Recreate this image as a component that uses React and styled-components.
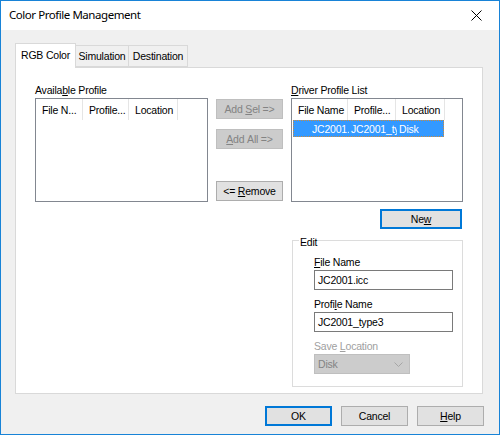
import React from "react"
import styled, { createGlobalStyle } from "styled-components"

const GlobalStyle = createGlobalStyle`
  html, body {
    margin: 0;
    padding: 0;
    background: #ffffff;
  }
  * {
    box-sizing: border-box;
  }
`

const Window = styled.div`
  width: 500px;
  height: 435px;
  border: 1px solid #1883d7;
  background: #f0f0f0;
  display: flex;
  flex-direction: column;
  font-family: "Liberation Sans", Arial, sans-serif;
  font-size: 10.5px;
  letter-spacing: -0.2px;
  color: #000;
  overflow: hidden;
`

const TitleBar = styled.div`
  height: 29px;
  background: #fff;
  display: flex;
  align-items: center;
  justify-content: space-between;
  padding: 0 0 0 8px;
  flex-shrink: 0;
`

const Title = styled.span`
  font-family: "Noto Sans", "Open Sans", sans-serif;
  font-size: 11.5px;
  letter-spacing: -0.45px;
  color: #000;
  padding-bottom: 2px;
`

const CloseBox = styled.div`
  width: 46px;
  height: 29px;
  display: flex;
  align-items: center;
  justify-content: center;
`

const Body = styled.div`
  flex: 1;
  padding: 13px 15px 0 14px;
  display: flex;
  flex-direction: column;
`

const TabStrip = styled.div`
  display: flex;
  align-items: flex-end;
  height: 24px;
  position: relative;
  z-index: 1;
`

const Tab = styled.div`
  height: ${({ active }) => (active ? "25px" : "22px")};
  width: ${({ w }) => w}px;
  margin-bottom: ${({ active }) => (active ? "-1px" : "0")};
  display: flex;
  align-items: center;
  justify-content: center;
  background: ${({ active }) => (active ? "#fff" : "#f0f0f0")};
  border: 1px solid #d9d9d9;
  border-bottom: ${({ active }) => (active ? "none" : "1px solid #d9d9d9")};
  margin-left: ${({ first }) => (first ? "0" : "-1px")};
  padding-bottom: ${({ active }) => (active ? "2px" : "0")};
`

const Panel = styled.div`
  width: 468px;
  height: 327px;
  background: #fff;
  border: 1px solid #d9d9d9;
  padding: 15px 0 0 19px;
  display: flex;
  gap: 8px;
`

const Column = styled.div`
  display: flex;
  flex-direction: column;
  width: ${({ w }) => w}px;
`

const Label = styled.div`
  height: 14px;
  line-height: 14px;
  margin-bottom: ${({ mb }) => mb || 1}px;
  color: ${({ disabled }) => (disabled ? "#a0a0a0" : "#000")};
  white-space: nowrap;
`

const Key = styled.span`
  text-decoration: underline;
  text-underline-offset: 1px;
`

const ListBox = styled.div`
  width: ${({ w }) => w}px;
  height: 104px;
  border: 1px solid #828790;
  background: #fff;
  display: flex;
  flex-direction: column;
`

const HeaderRow = styled.div`
  display: flex;
  height: 21px;
`

const HeaderCell = styled.div`
  width: ${({ w }) => w}px;
  padding-left: 6px;
  border-right: 1px solid #e5e5e5;
  display: flex;
  align-items: center;
  white-space: nowrap;
  overflow: hidden;
`

const SelectedRow = styled.div`
  display: flex;
  height: 17px;
  margin-left: 1px;
  width: 151px;
  background: #3399ff;
  color: #fff;
  outline: 1px dotted #cc8a3a;
  outline-offset: -1px;
`

const Cell = styled.div`
  width: ${({ w }) => w}px;
  flex-shrink: 0;
  padding-left: ${({ pad }) => pad}px;
  display: flex;
  align-items: center;
  white-space: nowrap;
  overflow: hidden;
`

const ButtonStack = styled.div`
  display: flex;
  flex-direction: column;
  width: 67px;
  padding-top: 16px;
`

const Button = styled.div`
  width: ${({ w }) => w || 67}px;
  height: 20px;
  display: flex;
  align-items: center;
  justify-content: center;
  background: ${({ disabled }) => (disabled ? "#cccccc" : "#e1e1e1")};
  border: 1px solid
    ${({ disabled, primary }) =>
      disabled ? "#bfbfbf" : primary ? "#0078d7" : "#adadad"};
  box-shadow: ${({ primary }) => (primary ? "inset 0 0 0 1px #0078d7" : "none")};
  color: ${({ disabled }) => (disabled ? "#838383" : "#000")};
  margin-top: ${({ mt }) => mt || 0}px;
  white-space: nowrap;
`

const RightActions = styled.div`
  display: flex;
  justify-content: flex-end;
  padding-right: 1px;
  margin-top: 7px;
`

const GroupBox = styled.fieldset`
  margin: 3px 0 0 1px;
  width: 171px;
  height: 155px;
  flex-shrink: 0;
  border: 1px solid #dcdcdc;
  padding: 0 0 0 21px;
  display: flex;
  flex-direction: column;
`

const Legend = styled.legend`
  padding: 4px 1px 0;
  margin-left: -15px;
  line-height: 12px;
`

const Field = styled.div`
  display: flex;
  flex-direction: column;
  margin-top: ${({ mt }) => mt}px;
`

const Input = styled.div`
  width: 139px;
  height: 20px;
  border: 1px solid #7a7a7a;
  background: #fff;
  padding-left: 3px;
  display: flex;
  align-items: center;
`

const Select = styled.div`
  width: 96px;
  height: 20px;
  border: 1px solid #bfbfbf;
  background: #cccccc;
  color: #838383;
  padding: 0 6px 0 3px;
  display: flex;
  align-items: center;
  justify-content: space-between;
`

const Footer = styled.div`
  display: flex;
  justify-content: flex-end;
  gap: 9px;
  padding-top: 12px;
`

const CloseIcon = () => (
  <svg width="11" height="11" viewBox="0 0 11 11">
    <path d="M0.5 0.5 L10.5 10.5 M10.5 0.5 L0.5 10.5" stroke="#000" strokeWidth="1" />
  </svg>
)

const Chevron = () => (
  <svg width="9" height="5" viewBox="0 0 9 5">
    <path d="M0.5 0.5 L4.5 4.5 L8.5 0.5" stroke="#a6a6a6" strokeWidth="1" fill="none" />
  </svg>
)

const App = () => {
  return (
    <>
      <GlobalStyle />
      <Window>
        <TitleBar>
          <Title>Color Profile Management</Title>
          <CloseBox>
            <CloseIcon />
          </CloseBox>
        </TitleBar>
        <Body>
          <TabStrip>
            <Tab active first w={61}>RGB Color</Tab>
            <Tab w={54}>Simulation</Tab>
            <Tab w={60}>Destination</Tab>
          </TabStrip>
          <Panel>
            <Column w={173}>
              <Label>
                Availa<Key>b</Key>le Profile
              </Label>
              <ListBox w={173}>
                <HeaderRow>
                  <HeaderCell w={47}>File N...</HeaderCell>
                  <HeaderCell w={46}>Profile...</HeaderCell>
                  <HeaderCell w={49}>Location</HeaderCell>
                </HeaderRow>
              </ListBox>
            </Column>
            <ButtonStack>
              <Button disabled>
                Add&nbsp;<Key>S</Key>el&nbsp;=&gt;
              </Button>
              <Button disabled mt={10}>
                <Key>A</Key>dd&nbsp;All&nbsp;=&gt;
              </Button>
              <Button mt={32}>
                &lt;=&nbsp;<Key>R</Key>emove
              </Button>
            </ButtonStack>
            <Column w={172}>
              <Label>
                <Key>D</Key>river Profile List
              </Label>
              <ListBox w={172}>
                <HeaderRow>
                  <HeaderCell w={56}>File Name</HeaderCell>
                  <HeaderCell w={48}>Profile...</HeaderCell>
                  <HeaderCell w={49}>Location</HeaderCell>
                </HeaderRow>
                <SelectedRow>
                  <Cell w={56} pad={19}>JC2001.icc</Cell>
                  <Cell w={48} pad={2}>JC2001_type3</Cell>
                  <Cell w={47} pad={2}>Disk</Cell>
                </SelectedRow>
              </ListBox>
              <RightActions>
                <Button primary w={82}>
                  Ne<Key>w</Key>
                </Button>
              </RightActions>
              <GroupBox>
                <Legend>Edit</Legend>
                <Field mt={7}>
                  <Label mb={1}>
                    <Key>F</Key>ile Name
                  </Label>
                  <Input>JC2001.icc</Input>
                </Field>
                <Field mt={7}>
                  <Label mb={1}>
                    Profi<Key>l</Key>e Name
                  </Label>
                  <Input>JC2001_type3</Input>
                </Field>
                <Field mt={7}>
                  <Label disabled mb={1}>
                    Save <Key>L</Key>ocation
                  </Label>
                  <Select>
                    Disk
                    <Chevron />
                  </Select>
                </Field>
              </GroupBox>
            </Column>
          </Panel>
          <Footer>
            <Button primary w={67}>OK</Button>
            <Button w={67}>Cancel</Button>
            <Button w={67}>
              <Key>H</Key>elp
            </Button>
          </Footer>
        </Body>
      </Window>
    </>
  )
}

export default App
